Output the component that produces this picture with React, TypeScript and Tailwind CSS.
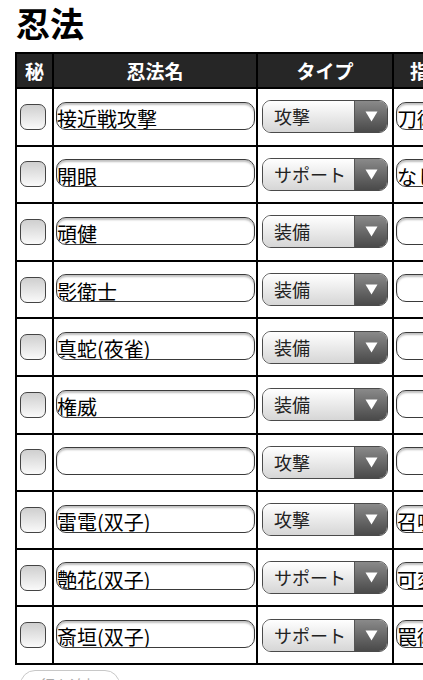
import React from 'react'

interface NinpoRow { name: string; type: string; skill: string }

const rows: NinpoRow[] = [
  { name: '接近戦攻撃', type: '攻撃', skill: '刀術' },
  { name: '開眼', type: 'サポート', skill: 'なし' },
  { name: '頑健', type: '装備', skill: '' },
  { name: '影衛士', type: '装備', skill: '' },
  { name: '真蛇(夜雀)', type: '装備', skill: '' },
  { name: '権威', type: '装備', skill: '' },
  { name: '', type: '攻撃', skill: '' },
  { name: '雷電(双子)', type: '攻撃', skill: '召喚' },
  { name: '艶花(双子)', type: 'サポート', skill: '可変' },
  { name: '斎垣(双子)', type: 'サポート', skill: '罠術' },
]

const font = { fontFamily: '"Noto Sans CJK JP", "Liberation Sans", sans-serif' }

function TextBox({ value, width }: { value: string; width: string }) {
  return (
    <input readOnly defaultValue={value}
      className={`${width} box-border h-[28px] rounded-[10px] border border-[#3a3a3a] bg-white pt-[6px] pb-0 px-0 text-[20px] leading-[20px] text-black outline-none shadow-[inset_0_2px_2px_rgba(0,0,0,0.25)]`}
      style={font} />
  )
}

function TypeSelect({ value }: { value: string }) {
  return (
    <div className="flex h-[33px] w-[126px] overflow-hidden rounded-[9px] border border-[#4a4a4a]">
      <div className="flex flex-1 items-center bg-gradient-to-b from-white to-[#d6d6d6] pl-[11px] text-[18px] text-[#222]">{value}</div>
      <div className="flex w-[33px] items-center justify-center border-l border-[#555] bg-gradient-to-b from-[#8a8a8a] to-[#4a4a4a]">
        <svg width="13" height="11" viewBox="0 0 13 11"><path d="M0.5 0.5 H12.5 L6.5 10.5 Z" fill="white" /></svg>
      </div>
    </div>
  )
}

export default function App() {
  return (
    <div className="h-[680px] w-[423px] overflow-hidden bg-white" style={font}>
      <h1 className="pl-[16px] pt-[1px] text-[34px] font-bold leading-[44px] text-black h-[52px]">忍法</h1>
      <table className="ml-[15px] w-[487px] table-fixed border-collapse border-2 border-black">
        <colgroup>
          <col className="w-[37px]" />
          <col className="w-[204px]" />
          <col className="w-[136px]" />
          <col className="w-[110px]" />
        </colgroup>
        <thead className="bg-[#262626] text-white">
          <tr className="h-[35px]">
            {['秘', '忍法名', 'タイプ', '指定特技'].map(h => (
              <th key={h} className="whitespace-nowrap border-2 border-black text-center text-[19px] font-bold leading-none">{h}</th>
            ))}
          </tr>
        </thead>
        <tbody>
          {rows.map((r, i) => (
            <tr key={i} className="h-[57.6px]">
              <td className="border-2 border-black p-0">
                <div className="ml-[3px] h-[26px] w-[26px] rounded-[7px] border-[1.5px] border-[#444] bg-gradient-to-b from-[#cfcfcf] to-[#fafafa]" />
              </td>
              <td className="border-2 border-black py-0 pl-[2px] pr-0">
                <TextBox value={r.name} width="w-[199px]" />
              </td>
              <td className="border-2 border-black py-0 pl-[4px] pr-0">
                <TypeSelect value={r.type} />
              </td>
              <td className="border-2 border-black py-0 pl-[2px] pr-0">
                <TextBox value={r.skill} width="w-[100px]" />
              </td>
            </tr>
          ))}
        </tbody>
      </table>
      <button className="ml-[20px] mt-[5px] h-[30px] w-[100px] rounded-full border border-[#c8c8c8] bg-white text-[15px] text-[#aaa]">行を追加</button>
    </div>
  )
}
